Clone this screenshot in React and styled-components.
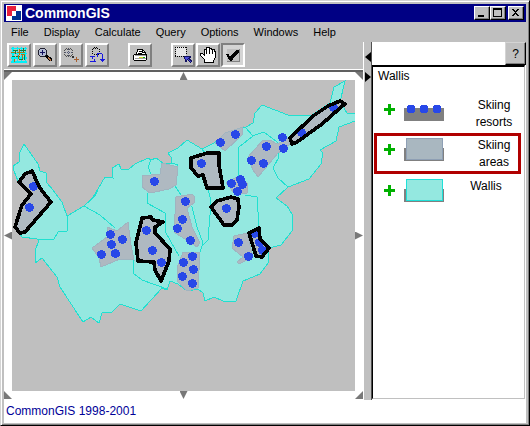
import React from "react";
import styled, { createGlobalStyle } from "styled-components";

const Global = createGlobalStyle`
  *, *::before, *::after { box-sizing: border-box; }
  body { margin: 0; background: #c0c0c0; font-family: "Liberation Sans", Arial, sans-serif; color: #000; }
  button { font: inherit; color: inherit; }
`;

const face = "#c0c0c0";

const Window = styled.div`
  min-height: 100vh;
  display: flex;
  flex-direction: column;
  background: ${face};
  padding: 2px 2px 1px 2px;
  border: 1px solid;
  border-color: #d4d4d4 #000 #000 #d4d4d4;
  box-shadow: inset 1px 1px 0 #fff, inset -1px -1px 0 #808080;
`;

const Inner = styled.div`
  flex: 1;
  display: flex;
  flex-direction: column;
  padding: 1px;
`;

const TitleBar = styled.header`
  height: 18px;
  flex: none;
  display: flex;
  align-items: center;
  gap: 3px;
  padding: 0 2px;
  background: #000084;
  color: #fff;
`;

const Title = styled.h1`
  flex: 1;
  margin: 0;
  font-size: 14px;
  line-height: 18px;
  font-weight: bold;
`;

const Captions = styled.div`
  display: flex;
`;

const CaptionButton = styled.button`
  width: 16px;
  height: 14px;
  padding: 0;
  display: grid;
  place-items: center;
  background: ${face};
  border: 1px solid;
  border-color: #fff #000 #000 #fff;
  box-shadow: inset -1px -1px 0 #808080;
  margin-left: ${(p) => (p.$apart ? "2px" : "0")};
`;

const MenuBar = styled.nav`
  height: 20px;
  flex: none;
  display: flex;
  align-items: center;
  gap: 15px;
  padding-left: 7px;
`;

const MenuItem = styled.button`
  padding: 0;
  border: 0;
  background: none;
  font-size: 11px;
  line-height: 20px;
`;

const Body = styled.main`
  flex: 1;
  display: grid;
  grid-template-columns: minmax(0, 1fr) 9px 154px;
  background: #fff;
`;

const MapSide = styled.section`
  display: flex;
  flex-direction: column;
`;

const ToolBar = styled.div`
  height: 30px;
  display: flex;
  gap: 19px;
  padding: 1px 3px 0;
  background: ${face};
  border-bottom: 2px solid #606060;
  box-shadow: inset 0 -1px 0 #fff;
`;

const ToolGroup = styled.div`
  display: flex;
  gap: ${(p) => (p.$tight ? "1px" : "2px")};
`;

const ToolButton = styled.button`
  width: 24px;
  height: 24px;
  padding: 0;
  display: grid;
  place-items: center;
  background: ${(p) => (p.$pressed ? "#d4d4d4" : face)};
  border: 2px solid;
  border-color: ${(p) => (p.$pressed ? "#808080 #fff #fff #808080" : "#fff #808080 #808080 #fff")};
`;

const MapFrame = styled.div`
  position: relative;
  padding: 8px;
  background: #fff;
`;

const MapDrawing = styled.svg`
  display: block;
  width: 100%;
  height: auto;
  background: #bfbfbf;
`;

const markerShapes = {
  nw: ["left: 0; top: 0;", "polygon(0 0, 100% 0, 0 100%)"],
  n: ["left: calc(50% - 4px); top: 0;", "polygon(50% 0, 100% 100%, 0 100%)"],
  ne: ["right: 0; top: 0;", "polygon(0 0, 100% 0, 100% 100%)"],
  w: ["left: 0; top: calc(50% - 4px);", "polygon(0 50%, 100% 0, 100% 100%)"],
  e: ["right: 0; top: calc(50% - 4px);", "polygon(0 0, 100% 50%, 0 100%)"],
  sw: ["left: 0; bottom: 0;", "polygon(0 0, 100% 100%, 0 100%)"],
  s: ["left: calc(50% - 4px); bottom: 0;", "polygon(0 0, 100% 0, 50% 100%)"],
  se: ["right: 0; bottom: 0;", "polygon(100% 0, 100% 100%, 0 100%)"],
};

const PanMarker = styled.button`
  position: absolute;
  ${(p) => markerShapes[p.$at][0]}
  width: 8px;
  height: 8px;
  padding: 0;
  border: 0;
  background: #787878;
  clip-path: ${(p) => markerShapes[p.$at][1]};
`;

const Divider = styled.div`
  display: flex;
  flex-direction: column;
  align-items: flex-end;
  gap: 10px;
  padding-top: 10px;
  background: ${face};
  border-left: 1px solid #fff;
  border-right: 1px solid #505050;
`;

const DividerArrow = styled.button`
  width: 6px;
  height: 10px;
  padding: 0;
  border: 0;
  background: #000;
  clip-path: ${(p) => (p.$left ? "polygon(0 50%, 100% 0, 100% 100%)" : "polygon(0 0, 100% 50%, 0 100%)")};
`;

const LegendSide = styled.aside`
  display: flex;
  flex-direction: column;
  padding-bottom: 1px;
`;

const LegendTop = styled.div`
  height: 23px;
  display: flex;
  justify-content: flex-end;
`;

const HelpButton = styled.button`
  width: 21px;
  padding: 0;
  background: ${face};
  border: 1px solid;
  border-color: #d4d4d4 #000 #000 #d4d4d4;
  box-shadow: inset -1px -1px 0 #808080;
  font-size: 12px;
`;

const LegendBox = styled.div`
  flex: 1;
  margin-right: 1px;
  border: 1px solid;
  border-color: #000 ${face} ${face} #000;
  border-top-width: 2px;
`;

const LegendTitle = styled.h2`
  margin: 0;
  padding-left: 5px;
  font-size: 12px;
  line-height: 18px;
  font-weight: normal;
`;

const LegendList = styled.ul`
  list-style: none;
  margin: 8px 3px 0 0;
  padding: 0 0 0 1px;
`;

const LegendRow = styled.li`
  height: ${(p) => (p.$selected ? "41px" : "40px")};
  display: flex;
  align-items: flex-start;
  justify-content: space-between;
  padding: ${(p) => (p.$selected ? "1px 0 0 7px" : "4px 3px 0 10px")};
  border: ${(p) => (p.$selected ? "3px solid #b00000" : "0")};
`;

const LegendKey = styled.div`
  display: flex;
  align-items: center;
  gap: 9px;
  padding-top: 1px;
`;

const LegendLabel = styled.span`
  width: 48px;
  margin-right: ${(p) => (p.$inset ? "8px" : "0")};
  text-align: center;
  font-size: 12px;
  line-height: 17px;
`;

const Status = styled.footer`
  height: 23px;
  flex: none;
  padding-left: 2px;
  background: #fff;
  color: #000098;
  font-size: 12px;
  line-height: 23px;
`;

const Art = styled.svg`
  display: block;
  shape-rendering: crispEdges;
`;

const Icon = ({ children, w = 16, h = 16 }) => (
  <Art width={w} height={h} viewBox={`0 0 ${w} ${h}`} aria-hidden="true" fill="none">
    {children}
  </Art>
);

const Logo = () => (
  <Icon>
    <path fill="#fff" d="M0 0h16v16H0z" />
    <path fill="#e8203c" d="M1 1h9v5H6v5H1z" />
    <path fill="#003090" d="M10 6h5v9H6v-4h4z" />
  </Icon>
);

const GridIcon = () => (
  <Icon>
    <path fill="#00f0f8" d="M0 1h16v1H0zM0 6h16v1H0zM0 10h16v2H0zM0 14h16v2H0zM1 0h2v16H1zM6 0h1v16H6zM10 0h1v16h-1zM14 0h1v16h-1z" />
    <path fill="#108040" d="M2 3h5v1H2zM8 3h7v1H8zM12 1h1v4h-1zM1 9h3v1H1zM5 9h4v1H5zM13 8h1v5h-1zM4 3h1v4H4zM8 12h4v1H8z" />
    <path fill="#a87818" d="M0 5h4v1H0zM6 5h8v1H6zM8 2h1v6H8zM10 7h4v1h-4zM3 12h1v3H3zM7 8h1v4H7zM11 8h1v4h-1z" />
  </Icon>
);

const ZoomIcon = () => (
  <Icon>
    <path fill="#b4bcd4" stroke="#202030" d="M3.500 1.500h4l2 2v4l-2 2h-4l-2-2v-4z" />
    <path fill="#101060" d="M3 5h5v1H3zM5 3h1v5H5z" />
    <path fill="#000" d="M9 8h2v1h1v1h2v1h1v3h-3v-1h-1v-1h-1v-1H9v-1H8V9h1z" />
    <path fill="#b87040" d="M11 10h1v1h1v1h1v2h-1v-1h-1v-1h-1z" />
  </Icon>
);

const ZoomPointIcon = () => (
  <Icon>
    <path stroke="#505050" strokeDasharray="1 1" d="M3 1.500h5M1.500 3v5M9.500 3v5M3 9.500h5M2 2.500h8M2 8.500h7" />
    <path stroke="#505878" strokeDasharray="1 1" d="M2 5.500h7M5.500 2v7" />
    <path fill="#303030" d="M9 9h2v2H9z" />
    <path fill="#a86030" d="M11 12h5v1h-5zM13 10h1v5h-1z" />
  </Icon>
);

const ZoomAreaIcon = () => (
  <Icon>
    <path stroke="#000" strokeDasharray="1 1" d="M5 .5h4M3.500 2v5M10.500 2v5M4 1.500h6M5 7.500h5" />
    <path fill="#1818e0" d="M1 9h5v1H1zM3 9h1v3H3zM1 14h6v1H1zM5 12h1v3H5zM8 6h5v1H8zM8 6h1v4H8zM13 7h1v8h-1zM11 12h5v1h-5zM12 13h3v1h-3z" />
  </Icon>
);

const PrintIcon = () => (
  <Icon>
    <path fill="#fff" stroke="#000" d="M4.500 7.500l1-5h5l3 3v2" />
    <path fill="#000" d="M7 4h3v1H7zM6 6h4v1H6zM10 2h1v3h2v1h-3z" />
    <path fill="#fff" stroke="#000" d="M2.500 7.500h12v5l-1 1h-11l-1-1v-4z" />
    <path fill="#a0a0a0" d="M3 8h11v1H3zM3 11h11v1H3z" />
    <path fill="#d8d820" d="M7 10h4v1H7z" />
    <path fill="#10a020" d="M11 10h2v1h-2z" />
  </Icon>
);

const SelectIcon = () => (
  <Icon w={18}>
    <path fill="#e8e8e8" d="M2 0h10v9H2z" />
    <path stroke="#000" strokeDasharray="1 1" d="M1 .5h12M1 9.500h9M1.500 0v10M12.500 0v8" />
    <path fill="#101060" d="M10 9h7v2h-1v1h1v1h1v2h-1v1h-1v-1h-1v-1h-1v-1h-1v2h-2z" />
    <path fill="#4848d8" d="M11 10h4v1h-1v1h1v1h1v1h1v1h-1v-1h-1v-1h-1v-1h-1v1h-1v-1h-1z" />
  </Icon>
);

const HandIcon = () => (
  <Icon w={18}>
    <path fill="#fff" stroke="#000" d="M5.500 15.500v-3l-4-4v-2h2l2 2v-6h2v-2h3v1h2v1h3v2h1v6l-2 3v2z" />
    <path fill="#000" d="M7 2h1v5H7zM10 1h1v6h-1zM13 2h1v5h-1z" />
  </Icon>
);

const CheckIcon = () => (
  <Icon>
    <path fill="#c0c0c0" d="M2 2h12v12H2z" />
    <path stroke="#808080" d="M14.500 2v12.500H2" />
    <path fill="#000" d="M1 7h3v2h2V8l2-2 3-3h3v2l-3 3-3 4-1 2H5l-2-3z" />
  </Icon>
);

const PlusIcon = () => (
  <Icon w={11} h={11}>
    <path fill="#00b000" d="M4 0h3v4h4v3H7v4H4V7H0V4h4z" />
  </Icon>
);

const Swatch = ({ kind }) => (
  <Art width="40" height="23" viewBox="0 0 40 23" aria-hidden="true">
    <path fill="#808080" d="M0 10h40v13H0z" />
    {kind === "points" && [7, 20, 33].map((x) => <circle key={x} cx={x} cy="11" r="4.500" fill="#2848e8" />)}
    {kind === "areas" && <path fill="#a9b7c0" stroke="#8e9fb4" d="M2.500.5h36v21h-36z" />}
    {kind === "land" && <path fill="#94e8e0" stroke="#20e0d8" d="M2.500.5h36v21h-36z" />}
  </Art>
);

const land = [
  "24,144 38,164 40,171 46,173 47,183 53,190 62,202 67,216 67,231 58,232 54,239 37,239 22,237 16,228 23,205 31,195 18,181 14,171 13,166 19,162 19,154",
  "67,216 84,206 95,196 98,190 92,199 105,177 113,178 112,168 119,164 121,169 128,170 135,164 148,158 151,160 156,158 163,163 172,163 171,157 168,153 178,148 187,140 202,149 212,144 217,141 225,133 242,128 246,127 253,123 255,113 262,105 288,115 312,115 330,103 334,87 345,81 340,102 347,113 355,113 355,121 339,127 336,141 320,150 323,153 321,164 309,179 288,187 276,198 287,206 292,214 292,231 281,245 269,248 268,263 260,274 243,281 236,301 223,301 214,297 205,301 203,293 198,289 187,291 178,284 170,281 167,290 162,288 141,311 120,304 112,312 102,313 99,323 91,317 83,322 60,287 57,277 42,258 35,263 35,251 39,240 54,239 58,232 67,231",
];

const borders = [
  "84,206 100,215 115,228",
  "151,160 148,167 151,174 160,174",
  "172,163 178,165 175,186 183,198 192,207 197,227 203,243 200,252",
  "148,193 147,203 165,213 166,233 179,256",
  "208,188 211,202 208,240 203,245",
  "133,260 133,273 142,280 167,289",
  "202,149 205,153",
  "245,127 253,136 239,147 238,177",
  "252,136 264,132 277,142 279,157 273,168 278,178 288,187",
  "245,195 257,197 259,227",
];

const skiAreas = [
  "215,143 225,133 243,127 242,135 225,151",
  "162,163 178,167 176,185 169,189 150,193 142,187 142,176 160,174",
  "226,183 237,177 247,183 247,193 235,194",
  "248,157 262,141 270,140 277,144 290,137 289,145 278,153 258,177 253,170",
  "92,248 107,237 107,227 117,231 128,222 131,245 134,260 120,259 101,267 99,258",
  "176,197 192,194 195,197 194,203 187,208 192,227 200,243 197,247 174,232",
  "183,252 200,252 198,288 187,291 178,282 177,268",
  "234,236 247,233 253,257 239,264 237,262 243,257 232,248",
];

const selectedAreas = [
  "32,171 25,174 19,182 31,194 22,205 15,227 20,233 25,232 51,202 42,191 38,184",
  "207,153 219,153 219,165 223,188 207,188 203,175 198,176 191,168 191,158",
  "290,138 313,116 328,106 340,101 345,104 340,108 322,124 297,142 292,144",
  "231,197 238,199 239,207 237,220 232,225 224,225 211,207 217,201",
  "142,218 151,217 153,220 163,222 155,227 155,233 170,249 169,261 161,281 155,270 154,262 138,261 136,243",
  "249,233 259,228 260,239 269,248 262,257 256,256",
];

const resorts = [
  [33, 186], [29, 207], [154, 181], [201, 163], [220, 142], [235, 134], [231, 183], [240, 179],
  [242, 184], [237, 191], [266, 146], [251, 160], [263, 163], [282, 137], [283, 148], [333, 107],
  [301, 132], [110, 234], [111, 244], [122, 239], [101, 254], [115, 253], [185, 201], [182, 219],
  [177, 228], [190, 240], [146, 230], [152, 250], [161, 262], [192, 256], [183, 262], [193, 269],
  [182, 276], [192, 283], [226, 208], [238, 242], [248, 256], [254, 233], [259, 242], [262, 250],
];

const WallisMap = () => (
  <MapDrawing viewBox="12 80 343 311" role="img" aria-label="Map of Wallis" shapeRendering="crispEdges">
    <g fill="#94e8e0" stroke="#20e0d0">{land.map((p) => <polygon key={p} points={p} />)}</g>
    <g fill="none" stroke="#20e0d0">{borders.map((p) => <polyline key={p} points={p} />)}</g>
    <g fill="#afb9c1" stroke="#a0b4c0">{skiAreas.map((p) => <polygon key={p} points={p} />)}</g>
    <g fill="#afb9c1">{selectedAreas.map((p) => <polygon key={p} points={p} />)}</g>
    <g fill="#2848e8">{resorts.map(([x, y]) => <circle key={`${x}-${y}`} cx={x + 0.5} cy={y + 0.5} r="4.500" />)}</g>
    <g fill="none" stroke="#000" strokeWidth="3.600" strokeLinejoin="round">
      {selectedAreas.map((p) => <polygon key={p} points={p} />)}
    </g>
  </MapDrawing>
);

const menus = ["File", "Display", "Calculate", "Query", "Options", "Windows", "Help"];

const toolGroups = [
  [["Full extent", GridIcon], ["Zoom in", ZoomIcon], ["Zoom to point", ZoomPointIcon], ["Zoom to area", ZoomAreaIcon]],
  [["Print", PrintIcon]],
  [["Select", SelectIcon], ["Pan", HandIcon], ["Pick objects", CheckIcon, true]],
];

const layers = [
  { name: "Skiing resorts", kind: "points" },
  { name: "Skiing areas", kind: "areas", selected: true },
  { name: "Wallis", kind: "land", inset: true },
];

export default function App() {
  return (
    <>
      <Global />
      <Window>
        <Inner>
          <TitleBar>
            <Logo />
            <Title>CommonGIS</Title>
            <Captions>
              <CaptionButton aria-label="Minimize">
                <Icon w={10} h={10}><path fill="#000" d="M1 7h6v2H1z" /></Icon>
              </CaptionButton>
              <CaptionButton aria-label="Maximize">
                <Icon w={10} h={10}><path fill="#000" fillRule="evenodd" d="M0 0h9v9H0zM1 2v6h7V2z" /></Icon>
              </CaptionButton>
              <CaptionButton aria-label="Close" $apart>
                <Icon w={10} h={10}>
                  <path fill="#000" d="M1 1h2v1h1v1h1V2h1V1h2v1H7v1H6v1H5v1h1v1h1v1h1v1H6V7H5V6H4v1H3v1H1V7h1V6h1V5h1V4H3V3H2V2H1z" />
                </Icon>
              </CaptionButton>
            </Captions>
          </TitleBar>
          <MenuBar>
            {menus.map((m) => <MenuItem key={m}>{m}</MenuItem>)}
          </MenuBar>
          <Body>
            <MapSide>
              <ToolBar>
                {toolGroups.map((group, i) => (
                  <ToolGroup key={i} $tight={i === 2}>
                    {group.map(([label, Glyph, pressed]) => (
                      <ToolButton key={label} aria-label={label} aria-pressed={!!pressed} $pressed={pressed}>
                        <Glyph />
                      </ToolButton>
                    ))}
                  </ToolGroup>
                ))}
              </ToolBar>
              <MapFrame>
                <WallisMap />
                {Object.keys(markerShapes).map((at) => <PanMarker key={at} $at={at} aria-label={`Pan ${at}`} />)}
              </MapFrame>
            </MapSide>
            <Divider>
              <DividerArrow $left aria-label="Widen legend" />
              <DividerArrow aria-label="Hide legend" />
            </Divider>
            <LegendSide>
              <LegendTop><HelpButton>?</HelpButton></LegendTop>
              <LegendBox>
                <LegendTitle>Wallis</LegendTitle>
                <LegendList>
                  {layers.map((l) => (
                    <LegendRow key={l.name} $selected={l.selected}>
                      <LegendKey><PlusIcon /><Swatch kind={l.kind} /></LegendKey>
                      <LegendLabel $inset={l.inset}>{l.name}</LegendLabel>
                    </LegendRow>
                  ))}
                </LegendList>
              </LegendBox>
            </LegendSide>
          </Body>
          <Status>CommonGIS 1998-2001</Status>
        </Inner>
      </Window>
    </>
  );
}
